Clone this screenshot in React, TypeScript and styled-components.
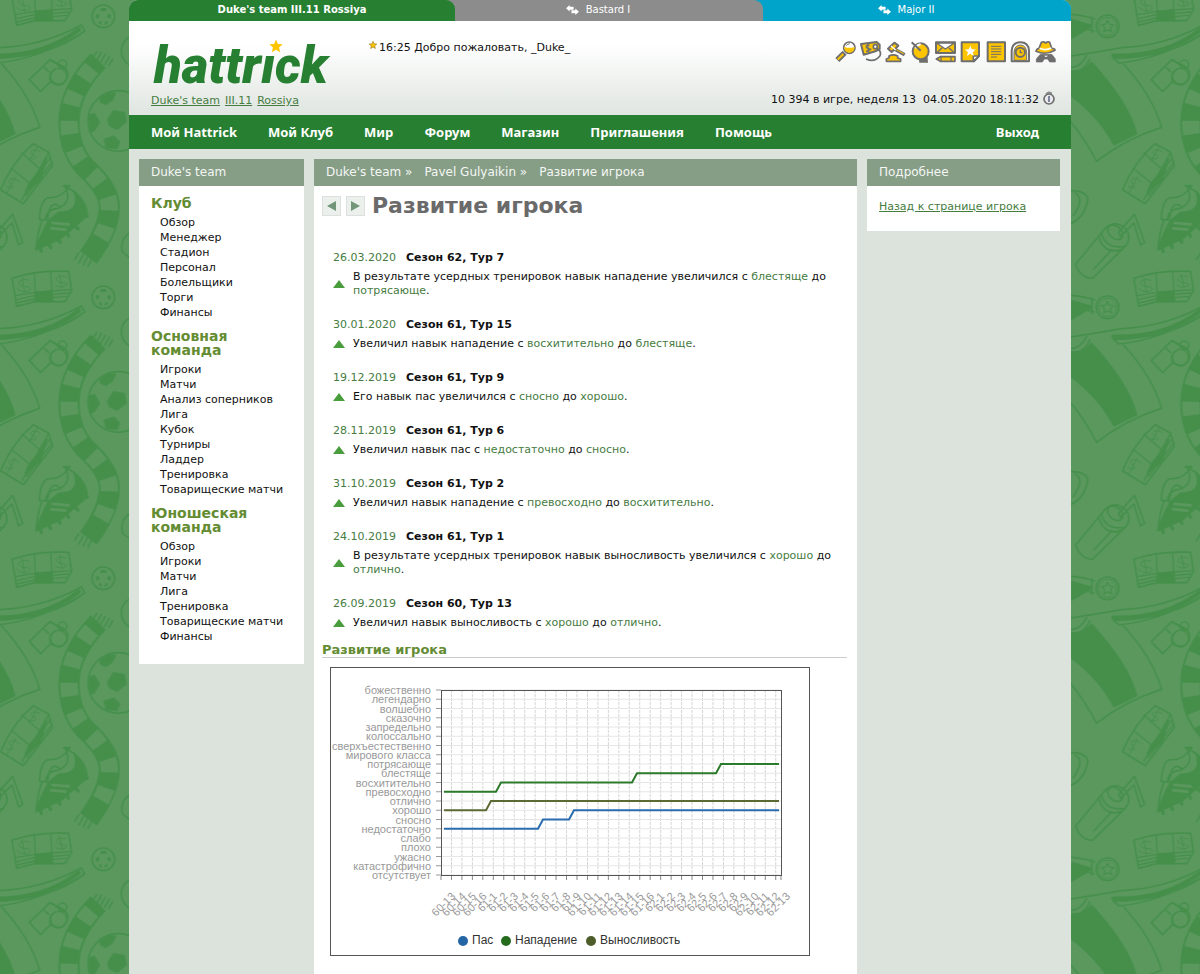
import React from "react";
import styled, { createGlobalStyle } from "styled-components";

const sans = '"DejaVu Sans", Verdana, sans-serif';
const menuFont = '"Noto Sans", Tahoma, sans-serif';

const color = {
  green: "#278031",
  link: "#467c3f",
  olive: "#648c32",
  bar: "#869d86",
  page: "#dce3dc",
  ink: "#111111",
  icon: "#6e6e6e",
  gold: "#fdc400",
};

const GlobalStyle = createGlobalStyle`
  *, *::before, *::after { box-sizing: border-box; }
  body {
    margin: 0;
    background: #5a985e;
    color: ${color.ink};
    font: 11px/14px ${sans};
  }
  h1, h2, h3, p, ul { margin: 0; padding: 0; }
  ul { list-style: none; }
  a { color: inherit; text-decoration: none; }
`;

/* ---------- backdrop ---------- */

const Stage = styled.div`
  position: relative;
  min-height: 100vh;
  overflow: hidden;
`;

const BackdropSvg = styled.svg`
  position: absolute;
  inset: 0;
  width: 100%;
  height: 100%;
`;

const star = (cx: number, cy: number, r: number, inner = 0.42) =>
  Array.from({ length: 10 }, (_, i) => {
    const a = -Math.PI / 2 + (i * Math.PI) / 5;
    const q = i % 2 ? r * inner : r;
    return `${(cx + q * Math.cos(a)).toFixed(1)},${(cy + q * Math.sin(a)).toFixed(1)}`;
  }).join(" ");

const DoodleSet = () => (
  <g fill="none" stroke="#468f4b" strokeWidth="5" strokeLinejoin="round" strokeLinecap="round">
    {/* stack of notes */}
    <path d="M36 838Q110 812 206 817L215 875L195 908H105L50 922Z" />
    <path d="M103 822L106 880M152 818L156 876M46 890L106 880L156 876L214 872M50 902L104 890M50 912L104 900M158 886L206 882M156 896L200 892" strokeWidth="4" />
    <path d="M106 880L156 876L158 908H105Z" fill="#468f4b" />
    <path d="M86 844C66 836 48 850 60 858S96 860 90 872S58 878 50 868M66 836L74 880M198 834C178 826 162 838 172 846S206 850 200 858S172 866 166 858M178 826L186 866" strokeWidth="3" />
    {/* tilted stack of notes */}
    <path d="M2 572Q36 490 100 434L146 460L157 500L70 614Z" />
    <path d="M66 462L122 512M34 508L88 552M146 460L66 602M152 474L74 590M157 488L80 590" strokeWidth="4" />
    <path d="M122 512L140 478L120 545L76 580L88 552Z" fill="#468f4b" />
    <path d="M120 458C100 444 84 460 98 466S112 484 90 478M112 444L88 486M58 550C44 530 20 540 30 552S44 574 18 562M46 534L22 580" strokeWidth="3" />
    {/* ball badges */}
    <circle cx="310" cy="52" r="34" />
    <g fill="#468f4b" stroke="none">
      <path d="M303 27H318L320 36H300ZM287 47L296 44L299 55L289 60ZM333 47L324 44L321 55L332 60ZM295 68L304 66L306 77L299 76ZM325 68L316 66L313 77L320 76Z" />
    </g>
    <circle cx="-43" cy="82" r="34" />
    <circle cx="-43" cy="82" r="27" strokeWidth="3" />
    <polygon points={star(-43, 83, 19, 0.5)} strokeWidth="4" />
    <path d="M-151 46Q-110 50-82 60M-151 84Q-110 88-84 96M-90 54V100M-151 62L-90 80" />
    <path d="M-151 66Q-118 72-90 82L-151 118Z" fill="#468f4b" />
    {/* ribbon */}
    <path d="M-160 172Q-90 162 0 146Q130 140 244 78L254 96Q150 176-26 178L-8 192Q120 180 252 98" />
    <path d="M-26 170Q130 174 236 92" strokeWidth="13" />
    {/* flag */}
    <path d="M5 195Q92 290 119 385Q10 420-76 487Q-110 420-160 360" />
    <path d="M-91 190Q20 310 44 404L-24 437Q-70 350-160 285V215Q-118 222-91 190Z" fill="#468f4b" />
    <path d="M-160 205Q-126 210-106 170M-160 222Q-116 222-96 180" />
    {/* whistle */}
    <path d="M150 182L88 242L122 278L152 248Q186 272 202 236Q208 206 176 196Z" />
    <path d="M150 182L190 206M134 206L146 218M152 248Q142 224 166 210" />
    <circle cx="187" cy="196" r="13" />
    <circle cx="176" cy="232" r="24" strokeWidth="4" />
    {/* scarf */}
    <path d="M295 185Q207 275 207 370Q207 450 255 505Q328 570 328 625Q328 690 265 775" strokeWidth="64" strokeLinecap="butt" />
    <path d="M283 198Q207 280 207 370Q207 450 255 505Q328 570 328 625Q328 690 280 750" stroke="#5a985e" strokeWidth="52" strokeDasharray="40 48" strokeDashoffset="-12" strokeLinecap="butt" />
    <path d="M290 158L276 180M304 160L290 186M316 166L302 190M328 172L314 196M338 180L326 200M236 762L224 782M250 768L236 792M262 774L250 798M276 778L264 802" />
    {/* football */}
    <circle cx="355" cy="366" r="91" />
    <path d="M322 362L340 334L374 340L380 370L352 392L328 382ZM264 348L284 342L300 370L284 396L270 402ZM300 296L326 278L348 282L338 304L318 318L300 310ZM312 420L342 410L360 428L352 450L318 446Z" fill="#468f4b" strokeWidth="2" />
    <circle cx="412" cy="156" r="48" />
    {/* boot */}
    <path d="M190 560Q260 590 262 650L180 720L108 752Q112 700 126 664L118 660Q122 600 146 596Q184 600 210 560Z" />
    <path d="M146 664Q120 710 108 752L180 720L262 650Q258 610 222 576Q244 640 176 640Z" fill="#468f4b" />
    <path d="M136 662Q140 630 174 628Q218 610 196 564M118 660L142 664L148 632Q160 604 182 626" />
    <path d="M158 672L206 676M154 688L196 692" stroke="#5a985e" strokeWidth="8" />
    <path d="M122 750L124 758M148 738L152 746M176 722L180 730M202 704L206 712M228 684L234 690M252 650L262 652" strokeWidth="10" />
    <path d="M392 700Q358 720 368 760L392 778" />
    {/* cup with a straw */}
    <path d="M-139 796L-50 688Q-20 660 14 692Q30 720 10 742L-88 838Q-124 838-139 796Z" />
    <path d="M-62 702Q-48 752 10 742M-70 712Q-54 768 0 752M-10 700L38 646L68 730L56 738L36 672L-4 712ZM-84 810L-30 752" />
    <ellipse cx="-20" cy="700" rx="26" ry="18" transform="rotate(40 -20 700)" />
    {/* puck */}
    <path d="M-160 575Q-110 572-102 600Q-112 660-160 676M-140 582Q-110 600-146 650" />
  </g>
);

const Backdrop = () => (
  <BackdropSvg aria-hidden="true">
    <defs>
      <pattern id="doodles" x="-160" y="0" width="1122" height="843" patternUnits="userSpaceOnUse" patternTransform="translate(0 -1) scale(0.3333)">
        <g transform="translate(160 0)">
          <DoodleSet />
        </g>
        <g transform="translate(160 -843)">
          <DoodleSet />
        </g>
      </pattern>
    </defs>
    <rect width="100%" height="100%" fill="url(#doodles)" />
  </BackdropSvg>
);

/* ---------- page shell ---------- */

const Shell = styled.div`
  position: relative;
  display: flex;
  flex-direction: column;
  max-width: 942px;
  min-height: 100vh;
  margin: 0 auto;
  background: ${color.page};
  border-radius: 9px 9px 0 0;
`;

const Tabs = styled.nav`
  display: flex;
  height: 21px;
  border-radius: 9px 9px 0 0;
  overflow: hidden;
`;

const TabSlot = styled.div<{ $grow: number; $behind: string }>`
  display: flex;
  flex: ${(p) => p.$grow} 1 0;
  background: ${(p) => p.$behind};
`;

const Tab = styled.a<{ $fill: string; $active?: boolean }>`
  display: flex;
  flex: 1;
  align-items: center;
  justify-content: center;
  gap: 7px;
  padding: 0 ${(p) => (p.$active ? 0 : 22)}px 2px 0;
  border-radius: 0 9px 0 0;
  background: ${(p) => p.$fill};
  color: #ffffff;
  font-size: 10px;
  font-weight: ${(p) => (p.$active ? 700 : 400)};
`;

const Header = styled.header`
  display: flex;
  height: 94px;
  padding: 0 14px 0 22px;
  background: linear-gradient(#ffffff 25%, #dfe5e0);
`;

const Brand = styled.div`
  flex: 0 0 218px;
  padding-top: 15px;
`;

const Logo = styled.a`
  position: relative;
  display: block;
  height: 58px;
  padding-left: 3px;
  color: ${color.green};
  font: italic 900 51px/60px Roboto, sans-serif;
`;

const LogoStar = styled.svg`
  position: absolute;
  left: 118px;
  top: 3px;
`;

const BrandLinks = styled.p`
  display: flex;
  gap: 5px;
  color: ${color.link};
  a { text-decoration: underline; }
`;

const Welcome = styled.p`
  display: flex;
  gap: 2px;
  padding-top: 20px;
`;

const HeaderSide = styled.div`
  display: flex;
  flex-direction: column;
  align-items: flex-end;
  margin-left: auto;
`;

const Tools = styled.div`
  display: flex;
  gap: 3px;
  padding-top: 20px;
  a { display: block; height: 22px; }
`;

const Clock = styled.p`
  display: flex;
  gap: 4px;
  margin-top: 28px;
  padding-right: 2px;
  span { padding-top: 2px; }
`;

const NavBar = styled.nav`
  display: flex;
  align-items: center;
  gap: 31px;
  height: 34px;
  padding: 0 32px 0 22px;
  background: ${color.green};
  color: #ffffff;
  font: 700 13px/18px ${menuFont};
  a:last-child { margin-left: auto; }
`;

const Columns = styled.div`
  display: grid;
  flex: 1;
  grid-template-columns: 165px minmax(0, 1fr) 193px;
  gap: 10px;
  align-items: start;
  padding: 10px 11px 0 10px;
`;

const Panel = styled.section<{ $stretch?: boolean }>`
  align-self: ${(p) => (p.$stretch ? "stretch" : "start")};
  background: #ffffff;
`;

const PanelBar = styled.div`
  display: flex;
  height: 27px;
  gap: 12px;
  padding: 0 12px;
  background: ${color.bar};
  color: #f4f7f4;
  font-size: 12px;
  line-height: 26px;
`;

/* ---------- side menu ---------- */

const MenuBody = styled.div`
  display: flex;
  flex-direction: column;
  gap: 9px;
  padding: 10px 12px 20px;
`;

const MenuTitle = styled.h2`
  color: ${color.olive};
  font: 700 14px/14px ${sans};
`;

const MenuList = styled.ul`
  padding: 5px 0 0 9px;
  line-height: 15px;
`;

/* ---------- main panel ---------- */

const MainBody = styled.div`
  padding: 7px 10px 18px 8px;
`;

const TitleRow = styled.div`
  display: flex;
  align-items: center;
  gap: 5px;
`;

const StepButton = styled.button`
  display: grid;
  place-items: center;
  width: 19px;
  height: 20px;
  padding: 0;
  border: 1px solid #dde0de;
  background: #ebf0ed;
  cursor: pointer;
`;

const Title = styled.h1`
  padding-left: 2px;
  color: #6a6a6a;
  font: 700 22px/26px ${sans};
`;

const Events = styled.div`
  display: flex;
  flex-direction: column;
  gap: 20px;
  padding: 32px 10px 12px 11px;
`;

const Event = styled.article`
  display: flex;
  flex-direction: column;
  gap: 5px;
`;

const EventHead = styled.h3`
  display: flex;
  gap: 10px;
  font: 700 11px/14px ${sans};
  time { color: ${color.link}; font-weight: 400; }
`;

const EventRow = styled.div`
  display: flex;
  align-items: center;
  gap: 8px;
  svg { flex: none; }
  a { color: ${color.link}; }
`;

const SectionTitle = styled.h2`
  border-bottom: 1px solid #cccccc;
  color: ${color.olive};
  font: 700 13px/15px ${sans};
`;

const Figure = styled.figure`
  max-width: 480px;
  margin: 9px 0 0 8px;
  border: 1px solid #555555;
  svg { display: block; width: 100%; height: auto; }
`;

const SideBody = styled.div`
  padding: 14px 12px 17px;
  a { color: ${color.link}; text-decoration: underline; }
`;

/* ---------- icons ---------- */

const Swap = () => (
  <svg width="13" height="10" viewBox="0 0 36 28" fill="#fff" aria-hidden="true">
    <path d="M0 9L10 0V5H21V13H10V18ZM36 19L26 10V15H15V23H26V28Z" />
  </svg>
);

const icons: { label: string; art: React.ReactNode }[] = [
  {
    label: "Поиск",
    art: (
      <>
        <circle cx="43" cy="20" r="17" fill="#fff" strokeWidth="5" />
        <path d="M27 17Q44 24 59 17Q59 34 43 35Q28 34 27 17Z" fill={color.gold} stroke="none" />
        <path d="M34 14Q36 9 44 8" strokeWidth="3" />
        <path d="M29 35L7 57" strokeWidth="17" />
        <path d="M25 39L8 56" stroke={color.gold} strokeWidth="6" />
      </>
    ),
  },
  {
    label: "Трансферы",
    art: (
      <>
        <path d="M3 9L50 3L59 11V24L46 31L11 41Z" fill={color.gold} strokeWidth="6" />
        <path d="M29 13Q17 12 19 18T30 24T18 31M23 9L26 35" strokeWidth="4" />
        <circle cx="46" cy="17" r="6" fill="#fff" strokeWidth="5" />
        <path d="M48 22Q66 30 60 44Q44 66 18 54" strokeWidth="5" />
      </>
    ),
  },
  {
    label: "Аукцион",
    art: (
      <>
        <path d="M28 24L59 41" strokeWidth="10" />
        <path d="M34 26L56 38" stroke={color.gold} strokeWidth="3" />
        <path d="M9 23L28 5L40 14L20 33Z" fill={color.gold} strokeWidth="6" />
        <path d="M18 15L32 27" stroke="#fff" strokeWidth="4" />
        <path d="M12 45Q25 38 38 45V51L47 54V61H4V54L12 51Z" fill={color.gold} strokeWidth="5" />
      </>
    ),
  },
  {
    label: "Цели",
    art: (
      <>
        <path d="M26 48L52 40L54 65H28Z" fill={color.icon} stroke="none" />
        <circle cx="32" cy="31" r="24" fill={color.gold} strokeWidth="6" />
        <path d="M16 22Q20 12 32 10" stroke="#fff" strokeWidth="6" />
        <path d="M5 4L32 29" strokeWidth="6" />
      </>
    ),
  },
  {
    label: "Почта",
    art: (
      <>
        <rect x="3" y="4" width="57" height="32" fill={color.gold} strokeWidth="6" />
        <path d="M5 6L31 24L58 6Z" fill="#fff" strokeWidth="4" />
        <path d="M5 35L22 20M58 35L41 20" strokeWidth="4" />
        <path d="M4 54L16 47H60V61H16Z" fill={color.gold} strokeWidth="5" />
        <path d="M18 47V61M48 47V61" strokeWidth="4" />
      </>
    ),
  },
  {
    label: "Закладки",
    art: (
      <>
        <path d="M5 4H57V45L42 61H5Z" fill={color.gold} strokeWidth="6" />
        <path d="M40 61V45H57Z" fill="#fff" strokeWidth="5" />
        <polygon points={star(31, 31, 17, 0.45)} fill="#fff" stroke="none" />
      </>
    ),
  },
  {
    label: "Заметки",
    art: (
      <>
        <rect x="8" y="4" width="52" height="57" fill={color.gold} strokeWidth="6" />
        <path d="M18 16H49M18 24H49M18 32H49M18 40H49M18 48H36" strokeWidth="3" />
      </>
    ),
  },
  {
    label: "Напоминания",
    art: (
      <>
        <path d="M5 61V30Q6 4 31 4Q56 4 57 30V61Z" fill="#fff" strokeWidth="6" />
        <path d="M12 58V34Q14 12 31 12Q48 12 50 34V58Z" fill={color.gold} strokeWidth="3" />
        <circle cx="31" cy="34" r="14" fill={color.gold} strokeWidth="6" />
        <path d="M31 27V35H37" strokeWidth="4" />
      </>
    ),
  },
  {
    label: "Скауты",
    art: (
      <>
        <path d="M4 63V54Q10 46 16 40H50Q56 46 61 54V63H44L38 54H28L22 63Z" fill={color.icon} strokeWidth="2" />
        <path d="M12 22L19 4Q26 1 32 6Q38 1 44 4L50 22Q60 22 60 28Q32 44 3 31Q4 24 12 22Z" fill={color.gold} strokeWidth="5" />
        <path d="M14 22Q32 30 49 21" stroke="#fff" strokeWidth="5" />
        <path d="M27 44H39L33 49Z" fill="#fff" stroke="none" />
      </>
    ),
  },
];

const Triangle = () => (
  <svg width="12" height="8" viewBox="0 0 12 8" aria-hidden="true">
    <path d="M6 0L12 8H0Z" fill="#4a9d3c" />
  </svg>
);

/* ---------- chart ---------- */

const levels = [
  "божественно", "легендарно", "волшебно", "сказочно", "запредельно", "колоссально",
  "сверхъестественно", "мирового класса", "потрясающе", "блестяще", "восхитительно",
  "превосходно", "отлично", "хорошо", "сносно", "недостаточно", "слабо", "плохо",
  "ужасно", "катастрофично", "отсутствует",
];

const rounds = [
  ...[13, 14, 15, 16].map((n) => `60-${n}`),
  ...Array.from({ length: 16 }, (_, i) => `61-${i + 1}`),
  ...Array.from({ length: 13 }, (_, i) => `62-${i + 1}`),
];

const plot = { left: 110, right: 450, top: 22, bottom: 207 };
const levelY = (i: number) => plot.top + ((plot.bottom - plot.top) * i) / 20;
const roundX = (i: number) => plot.left + i * 10.46;

/* Each series: starting level, then [x where the rise begins, level reached]. */
const series: { name: string; stroke: string; start: number; steps: [number, number][] }[] = [
  { name: "Пас", stroke: "#2a6cae", start: 15, steps: [[207, 14], [238, 13]] },
  { name: "Нападение", stroke: "#2c7a2b", start: 11, steps: [[165, 10], [301, 9], [385, 8]] },
  { name: "Выносливость", stroke: "#5b6a33", start: 13, steps: [[155, 12]] },
];

const linePath = (start: number, steps: [number, number][]) => {
  let level = start;
  let d = `M${plot.left + 3} ${levelY(start)}`;
  steps.forEach(([x, next]) => {
    d += `L${x} ${levelY(level)}L${x + 5} ${levelY(next)}`;
    level = next;
  });
  return `${d}L${plot.right - 2} ${levelY(level)}`;
};

const legend = [
  { x: 132, name: "Пас", fill: "#2465a6" },
  { x: 175, name: "Нападение", fill: "#246b1e" },
  { x: 260, name: "Выносливость", fill: "#4d5d2a" },
];

const Chart = () => (
  <svg viewBox="0 0 478 287" role="img" aria-label="Развитие игрока" fontFamily='"Liberation Sans", Arial, sans-serif'>
    {rounds.slice(1).map((r, i) => (
      <line key={r} x1={roundX(i + 1)} x2={roundX(i + 1)} y1={plot.top} y2={plot.bottom} stroke="#d4d4d4" strokeDasharray="3 1" />
    ))}
    {levels.map((l, i) => (
      <g key={l}>
        <line x1={plot.left} x2={plot.right} y1={levelY(i)} y2={levelY(i)} stroke="#e6e6e6" />
        <line x1={plot.left - 5} x2={plot.left} y1={levelY(i)} y2={levelY(i)} stroke="#999999" />
        <text x="100" y={levelY(i) + 4} textAnchor="end" fontSize="11" fill="#999999">{l}</text>
      </g>
    ))}
    <rect x={plot.left} y={plot.top} width={plot.right - plot.left} height={plot.bottom - plot.top} fill="none" stroke="#555555" shapeRendering="crispEdges" />
    {[...rounds.map((_, i) => roundX(i)), plot.right].map((x) => (
      <line key={x} x1={x} x2={x} y1={plot.bottom + 1} y2={plot.bottom + 5} stroke="#888888" />
    ))}
    {rounds.map((r, i) => (
      <text key={r} transform={`translate(${roundX(i) + 15} 229) rotate(-45)`} textAnchor="end" fontSize="11" fill="#999999">{r}</text>
    ))}
    {series.map((s) => (
      <path key={s.name} d={linePath(s.start, s.steps)} fill="none" stroke={s.stroke} strokeWidth="2" />
    ))}
    {legend.map((l) => (
      <g key={l.name}>
        <circle cx={l.x} cy="273" r="5" fill={l.fill} />
        <text x={l.x + 9} y="276" fontSize="12" fill="#333333">{l.name}</text>
      </g>
    ))}
  </svg>
);

/* ---------- content ---------- */

const menu = [
  { title: "Клуб", items: ["Обзор", "Менеджер", "Стадион", "Персонал", "Болельщики", "Торги", "Финансы"] },
  { title: "Основная команда", items: ["Игроки", "Матчи", "Анализ соперников", "Лига", "Кубок", "Турниры", "Ладдер", "Тренировка", "Товарищеские матчи"] },
  { title: "Юношеская команда", items: ["Обзор", "Игроки", "Матчи", "Лига", "Тренировка", "Товарищеские матчи", "Финансы"] },
];

const nav = ["Мой Hattrick", "Мой Клуб", "Мир", "Форум", "Магазин", "Приглашения", "Помощь", "Выход"];

const events = [
  { date: "26.03.2020", round: "Сезон 62, Тур 7", text: "В результате усердных тренировок навык нападение увеличился с", from: "блестяще", to: "потрясающе" },
  { date: "30.01.2020", round: "Сезон 61, Тур 15", text: "Увеличил навык нападение с", from: "восхитительно", to: "блестяще" },
  { date: "19.12.2019", round: "Сезон 61, Тур 9", text: "Его навык пас увеличился с", from: "сносно", to: "хорошо" },
  { date: "28.11.2019", round: "Сезон 61, Тур 6", text: "Увеличил навык пас с", from: "недостаточно", to: "сносно" },
  { date: "31.10.2019", round: "Сезон 61, Тур 2", text: "Увеличил навык нападение с", from: "превосходно", to: "восхитительно" },
  { date: "24.10.2019", round: "Сезон 61, Тур 1", text: "В результате усердных тренировок навык выносливость увеличился с", from: "хорошо", to: "отлично" },
  { date: "26.09.2019", round: "Сезон 60, Тур 13", text: "Увеличил навык выносливость с", from: "хорошо", to: "отлично" },
];

export default function App() {
  return (
    <Stage>
      <GlobalStyle />
      <Backdrop />
      <Shell>
        <Tabs aria-label="Команды">
          <TabSlot $grow={326} $behind="#8c8c8c">
            <Tab href="#" $fill={color.green} $active>Duke's team III.11 Rossiya</Tab>
          </TabSlot>
          <TabSlot $grow={308} $behind="#00a3c9">
            <Tab href="#" $fill="#8c8c8c"><Swap />Bastard I</Tab>
          </TabSlot>
          <TabSlot $grow={308} $behind="#00a3c9">
            <Tab href="#" $fill="#00a3c9"><Swap />Major II</Tab>
          </TabSlot>
        </Tabs>
        <Header>
          <Brand>
            <Logo href="#" aria-label="hattrick">
              hattrıck
              <LogoStar width="14" height="14" viewBox="0 0 14 14" aria-hidden="true">
                <polygon points={star(7, 7.5, 7, 0.46)} fill={color.gold} />
              </LogoStar>
            </Logo>
            <BrandLinks>
              <a href="#">Duke's team</a>
              <a href="#">III.11</a>
              <a href="#">Rossiya</a>
            </BrandLinks>
          </Brand>
          <Welcome>
            <svg width="8" height="8" viewBox="0 0 14 14" aria-hidden="true">
              <polygon points={star(7, 7.5, 7, 0.46)} fill={color.gold} stroke="#8a7420" />
            </svg>
            16:25 Добро пожаловать, _Duke_
          </Welcome>
          <HeaderSide>
            <Tools>
              {icons.map((icon) => (
                <a key={icon.label} href="#" aria-label={icon.label}>
                  <svg width="22" height="22" viewBox="0 0 66 66" fill="none" stroke={color.icon} strokeLinejoin="round">
                    {icon.art}
                  </svg>
                </a>
              ))}
            </Tools>
            <Clock>
              <span>10 394 в игре, неделя 13&nbsp; 04.05.2020 18:11:32</span>
              <svg width="12" height="14" viewBox="0 0 36 42" aria-hidden="true">
                <path d="M9 7Q17-1 26 5L24 12H11Z" fill="#9a9a9a" stroke="#777777" strokeWidth="2" />
                <circle cx="18" cy="24" r="15" fill="#e8e8ee" stroke="#6d6d6d" strokeWidth="5" />
                <path d="M18 15V26M18 22V33" stroke="#4a5578" strokeWidth="4" />
              </svg>
            </Clock>
          </HeaderSide>
        </Header>
        <NavBar aria-label="Главное меню">
          {nav.map((item) => <a key={item} href="#">{item}</a>)}
        </NavBar>
        <Columns>
          <Panel>
            <PanelBar>Duke's team</PanelBar>
            <MenuBody>
              {menu.map((group) => (
                <div key={group.title}>
                  <MenuTitle>{group.title}</MenuTitle>
                  <MenuList>
                    {group.items.map((item) => <li key={item}><a href="#">{item}</a></li>)}
                  </MenuList>
                </div>
              ))}
            </MenuBody>
          </Panel>
          <Panel $stretch>
            <PanelBar>
              <a href="#">Duke's team »</a>
              <a href="#">Pavel Gulyaikin »</a>
              <a href="#">Развитие игрока</a>
            </PanelBar>
            <MainBody>
              <TitleRow>
                <StepButton aria-label="Предыдущий игрок">
                  <svg width="9" height="10" viewBox="0 0 9 10"><path d="M0 5L9 0V10Z" fill="#73967a" /></svg>
                </StepButton>
                <StepButton aria-label="Следующий игрок">
                  <svg width="9" height="10" viewBox="0 0 9 10"><path d="M9 5L0 0V10Z" fill="#73967a" /></svg>
                </StepButton>
                <Title>Развитие игрока</Title>
              </TitleRow>
              <Events>
                {events.map((e) => (
                  <Event key={e.date}>
                    <EventHead><time>{e.date}</time>{e.round}</EventHead>
                    <EventRow>
                      <Triangle />
                      <p>{e.text} <a href="#">{e.from}</a> до <a href="#">{e.to}</a>.</p>
                    </EventRow>
                  </Event>
                ))}
              </Events>
              <SectionTitle>Развитие игрока</SectionTitle>
              <Figure><Chart /></Figure>
            </MainBody>
          </Panel>
          <Panel>
            <PanelBar>Подробнее</PanelBar>
            <SideBody><a href="#">Назад к странице игрока</a></SideBody>
          </Panel>
        </Columns>
      </Shell>
    </Stage>
  );
}
